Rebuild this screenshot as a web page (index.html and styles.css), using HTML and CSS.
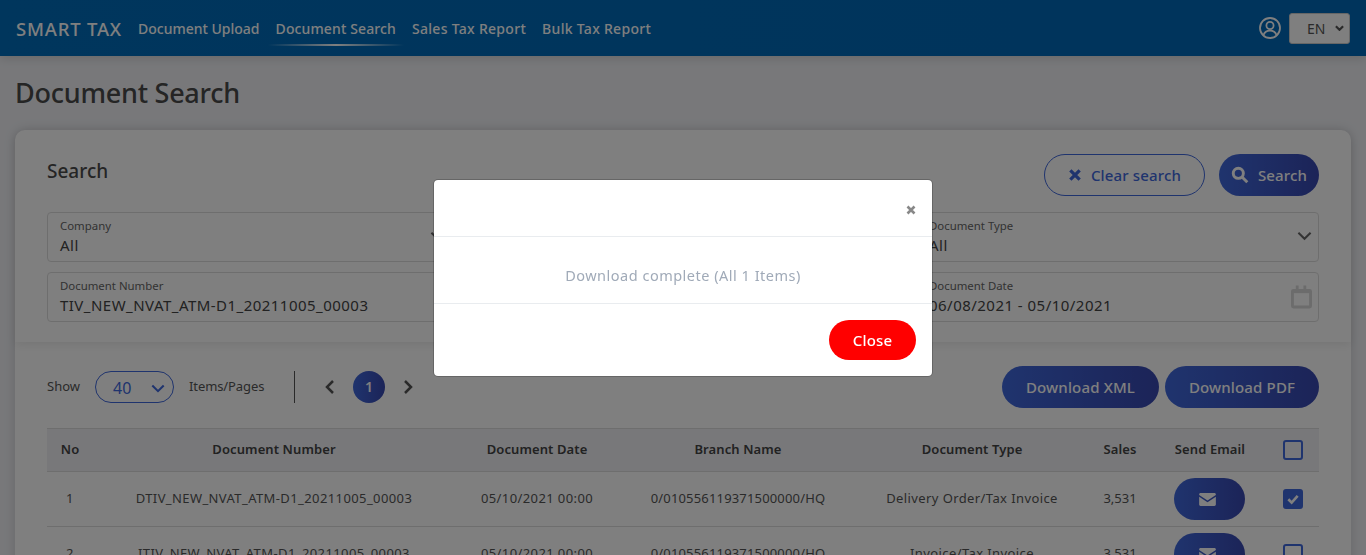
FILE: index.html
```html
<!DOCTYPE html>
<html>
    <head>
        <title>Smart Tax</title>
        <meta charset="utf-8">
        <link rel="stylesheet" href="styles.css">
    </head>
    <body>
        <header class="navbar">
            <div class="brand">SMART TAX</div>
            <nav class="nav_links">
                <a href="#">Document Upload</a>
                <a href="#" class="active">Document Search</a>
                <a href="#">Sales Tax Report</a>
                <a href="#">Bulk Tax Report</a>
            </nav>
            <svg class="user_icon" viewBox="0 0 24 24">
                <circle cx="12" cy="12" r="10"/>
                <circle cx="12" cy="9.5" r="3.6"/>
                <path d="M5.5 19c1-3 3.4-4.4 6.5-4.4s5.500 1.400 6.500 4.400"/>
            </svg>
            <div class="lang_select">
                <span>EN</span>
                <svg viewBox="0 0 10 6"><path d="M1 1l4 4 4-4"/></svg>
            </div>
        </header>

        <h1 class="page_title">Document Search</h1>

        <main class="panel">
            <section class="search_box">
                <div class="search_head">
                    <h2>Search</h2>
                    <div class="search_actions">
                        <button class="btn btn_outline">
                            <svg viewBox="0 0 12 12"><path d="M2 2l8 8M10 2l-8 8"/></svg>
                            Clear search
                        </button>
                        <button class="btn btn_primary">
                            <svg viewBox="0 0 16 16"><circle cx="6.500" cy="6.500" r="4.500"/><path d="M10 10l4.500 4.500"/></svg>
                            Search
                        </button>
                    </div>
                </div>
                <div class="fields">
                    <div class="field">
                        <label>Company</label>
                        <div class="value">All</div>
                        <svg class="field_icon" viewBox="0 0 16 10"><path d="M1.500 1.500L8 8l6.500-6.500"/></svg>
                    </div>
                    <div class="field"></div>
                    <div class="field">
                        <label>Document Type</label>
                        <div class="value">All</div>
                        <svg class="field_icon" viewBox="0 0 16 10"><path d="M1.500 1.500L8 8l6.500-6.500"/></svg>
                    </div>
                    <div class="field">
                        <label>Document Number</label>
                        <div class="value">TIV_NEW_NVAT_ATM-D1_20211005_00003</div>
                    </div>
                    <div class="field"></div>
                    <div class="field">
                        <label>Document Date</label>
                        <div class="value">06/08/2021 - 05/10/2021</div>
                        <svg class="calendar_icon" viewBox="0 0 22 24">
                            <path d="M6.500 0v5M14.500 0v5"/>
                            <rect x="1.500" y="5" width="19" height="17.500" rx="1"/>
                            <path d="M1.500 6.500h19"/>
                        </svg>
                    </div>
                </div>
            </section>

            <section class="results">
                <div class="toolbar">
                    <span class="show_label">Show</span>
                    <div class="page_size">
                        <span>40</span>
                        <svg viewBox="0 0 16 10"><path d="M1.500 1.500L8 8l6.500-6.500"/></svg>
                    </div>
                    <span class="items_label">Items/Pages</span>
                    <div class="pager">
                        <svg viewBox="0 0 10 16"><path d="M8 2L2 8l6 6"/></svg>
                        <span class="page_num">1</span>
                        <svg viewBox="0 0 10 16"><path d="M2 2l6 6-6 6"/></svg>
                    </div>
                    <div class="downloads">
                        <button class="btn btn_primary btn_xml">Download XML</button>
                        <button class="btn btn_primary btn_pdf">Download PDF</button>
                    </div>
                </div>

                <table class="doc_table">
                    <colgroup>
                        <col class="c_no"><col class="c_num"><col class="c_date"><col class="c_branch">
                        <col class="c_type"><col class="c_sales"><col class="c_mail"><col class="c_check">
                    </colgroup>
                    <tr>
                        <th>No</th>
                        <th>Document Number</th>
                        <th>Document Date</th>
                        <th>Branch Name</th>
                        <th>Document Type</th>
                        <th>Sales</th>
                        <th>Send Email</th>
                        <th><span class="check"></span></th>
                    </tr>
                    <tr>
                        <td>1</td>
                        <td>DTIV_NEW_NVAT_ATM-D1_20211005_00003</td>
                        <td>05/10/2021 00:00</td>
                        <td class="branch">0/010556119371500000/HQ</td>
                        <td>Delivery Order/Tax Invoice</td>
                        <td class="sales">3,531</td>
                        <td><button class="btn btn_primary btn_mail"><svg viewBox="0 0 18 14"><path d="M0 1.500C0 .7.700 0 1.500 0h15c.8 0 1.500.7 1.500 1.500v.6L9 8 0 2.100zM0 4l9 6 9-6v8.500c0 .8-.7 1.500-1.500 1.500h-15C.7 14 0 13.300 0 12.500z"/></svg></button></td>
                        <td><span class="check checked"><svg viewBox="0 0 12 12"><path d="M2.500 6.200l2.500 2.500 4.500-5"/></svg></span></td>
                    </tr>
                    <tr>
                        <td>2</td>
                        <td>ITIV_NEW_NVAT_ATM-D1_20211005_00003</td>
                        <td>05/10/2021 00:00</td>
                        <td class="branch">0/010556119371500000/HQ</td>
                        <td>Invoice/Tax Invoice</td>
                        <td class="sales">3,531</td>
                        <td><button class="btn btn_primary btn_mail"><svg viewBox="0 0 18 14"><path d="M0 1.500C0 .7.700 0 1.500 0h15c.8 0 1.500.7 1.500 1.500v.6L9 8 0 2.100zM0 4l9 6 9-6v8.500c0 .8-.7 1.500-1.500 1.500h-15C.7 14 0 13.300 0 12.500z"/></svg></button></td>
                        <td><span class="check"></span></td>
                    </tr>
                </table>
            </section>
        </main>

        <div class="backdrop">
            <div class="modal">
                <div class="modal_head">
                    <svg viewBox="0 0 10 10"><path d="M1.500 1.500l7 7M8.500 1.500l-7 7"/></svg>
                </div>
                <div class="modal_body">Download complete (All 1 Items)</div>
                <div class="modal_foot">
                    <button class="btn btn_close">Close</button>
                </div>
            </div>
        </div>
    </body>
</html>
```

FILE: styles.css
```css
html, body {
    height: 100%;
    overflow: hidden;
}

body {
    margin: 0;
    font-family: "Noto Sans", sans-serif;
    background-color: #f0f1f5;
    color: #555;
}

h1, h2 {
    margin: 0;
    font-weight: 500;
}

svg {
    display: block;
    fill: none;
    stroke: currentColor;
}

/* top bar */
.navbar {
    display: flex;
    align-items: center;
    height: 56px;
    padding: 0 16px;
    background: linear-gradient(90deg, #006cba, #0068b8);
    box-shadow: 0 2px 10px rgba(0, 0, 0, .15);
    color: white;
}

.brand {
    width: 114px;
    font-size: 18.500px;
    font-weight: 500;
    letter-spacing: .8px;
}

.nav_links {
    display: flex;
    flex: 1;
    height: 100%;
}

.nav_links a {
    display: flex;
    align-items: center;
    position: relative;
    padding: 0 8px;
    color: white;
    font-size: 14px;
    font-weight: 500;
    letter-spacing: .12px;
    text-decoration: none;
}

.nav_links a:first-child {
    letter-spacing: 0;
}

.nav_links a:nth-child(n+3) {
    letter-spacing: .3px;
}

.nav_links a.active::after {
    content: "";
    position: absolute;
    left: 0;
    right: 0;
    top: 44px;
    height: 2px;
    background: linear-gradient(90deg, transparent, #fff 50%, transparent);
}

.user_icon {
    width: 24px;
    height: 24px;
    stroke-width: 1.800;
    margin-right: 7px;
}

.lang_select {
    display: flex;
    align-items: center;
    box-sizing: border-box;
    width: 61px;
    height: 31px;
    padding: 0 5px 0 17px;
    background: white;
    border: 1px solid #ccc;
    border-radius: 3px;
    color: #555;
    font-size: 14px;
}

.lang_select span {
    flex: 1;
}

.lang_select svg {
    width: 9px;
    height: 6px;
    stroke-width: 2.400;
}

.page_title {
    height: 74px;
    padding-left: 15px;
    color: #4a4a4a;
    font-size: 27px;
    line-height: 73px;
    letter-spacing: -.25px;
}

/* white sheet */
.panel {
    margin: 0 15px;
    height: 500px;
    background: white;
    border-radius: 10px 10px 0 0;
    box-shadow: 0 0 12px rgba(0, 0, 0, .15);
}

.search_box {
    box-sizing: border-box;
    height: 212px;
    padding: 24px 32px 0;
    border-radius: 10px 10px 0 0;
    box-shadow: 0 3px 10px rgba(0, 0, 0, .08);
}

.search_head {
    display: flex;
    justify-content: space-between;
    height: 58px;
}

.search_head h2 {
    color: #4a4a4a;
    font-size: 19px;
    line-height: 34px;
}

.search_actions {
    display: flex;
    gap: 14px;
}

.btn {
    display: flex;
    align-items: center;
    justify-content: center;
    box-sizing: border-box;
    height: 42px;
    padding: 0;
    border: 0;
    border-radius: 21px;
    font-family: inherit;
    font-size: 15px;
    font-weight: 500;
    letter-spacing: .15px;
}

.btn_outline {
    width: 161px;
    gap: 9px;
    background: white;
    border: 1px solid #3f68dc;
    color: #3f68dc;
}

.btn_outline svg {
    width: 14px;
    height: 14px;
    stroke-width: 2.800;
}

.btn_primary {
    background: linear-gradient(90deg, #3f68dc, #3848b0);
    color: white;
}

.search_actions .btn_primary {
    width: 100px;
    gap: 9px;
}

.search_actions .btn_primary svg {
    width: 18px;
    height: 18px;
    stroke-width: 2.600;
}

.fields {
    display: grid;
    grid-template-columns: 405px 1fr 403px;
    grid-auto-rows: 50px;
    gap: 10px;
}

.field {
    position: relative;
    box-sizing: border-box;
    padding: 5px 12px 0;
    border: 1px solid #ddd;
    border-radius: 4px;
}

.field label {
    display: block;
    font-size: 11.400px;
    line-height: 15px;
    color: #666;
}

.value {
    margin-top: 1px;
    font-size: 15px;
    line-height: 22px;
    color: #444;
    letter-spacing: .47px;
}

.field_icon {
    position: absolute;
    right: 6px;
    top: 18px;
    width: 15px;
    height: 10px;
    stroke-width: 2.200;
    color: #666;
}

.calendar_icon {
    position: absolute;
    right: 6px;
    top: 12px;
    width: 21px;
    height: 24px;
    stroke-width: 3;
    color: #d8d8d8;
}

/* list part */
.results {
    padding: 0 32px;
}

.toolbar {
    display: flex;
    align-items: center;
    box-sizing: border-box;
    height: 86px;
    padding-top: 4px;
    font-size: 13px;
}

.show_label {
    width: 48px;
    margin-bottom: 3px;
}

.page_size {
    display: flex;
    align-items: center;
    justify-content: space-between;
    box-sizing: border-box;
    width: 79px;
    height: 32px;
    padding: 2px 8px 0 17px;
    border: 1px solid #3f68dc;
    border-radius: 16px;
    color: #3f68dc;
    font-size: 16px;
}

.page_size svg {
    width: 14px;
    height: 9px;
    stroke-width: 2.400;
}

.items_label {
    width: 105px;
    margin: 0 0 3px 15px;
    letter-spacing: -.1px;
}

.pager {
    display: flex;
    align-items: center;
    height: 32px;
    flex: 1;
    padding-left: 30px;
    border-left: 1px solid #555;
    color: #555;
}

.pager svg {
    width: 10px;
    height: 16px;
    stroke-width: 2.500;
}

.page_num {
    width: 32px;
    height: 32px;
    margin: 0 18px;
    border-radius: 50%;
    background: linear-gradient(90deg, #3f68dc, #3848b0);
    color: white;
    font-size: 14px;
    font-weight: 600;
    line-height: 32px;
    text-align: center;
}

.downloads {
    display: flex;
    gap: 6px;
}

.btn_xml {
    width: 157px;
}

.btn_pdf {
    width: 154px;
}

.doc_table {
    width: 1272px;
    table-layout: fixed;
    border-collapse: collapse;
    font-size: 13px;
    text-align: center;
}

.c_no { width: 46px; }
.c_num { width: 362px; }
.c_date { width: 164px; }
.c_branch { width: 238px; }
.c_type { width: 230px; }
.c_sales { width: 66px; }
.c_mail { width: 114px; }
.c_check { width: 52px; }

.doc_table th {
    height: 40px;
    padding: 0 0 2px;
    background: #f0f1f5;
    border-top: 1px solid #ddd;
    border-bottom: 1px solid #ddd;
    font-size: 13px;
    font-weight: 600;
    letter-spacing: .1px;
    color: #444;
}

.doc_table td {
    height: 52px;
    padding: 0 0 2px;
    border-bottom: 1px solid #ddd;
    letter-spacing: .4px;
}

.doc_table td.branch {
    letter-spacing: .17px;
}

.doc_table td.sales {
    letter-spacing: 0;
}

.btn_mail {
    width: 71px;
    margin: 2px 0 0 21px;
    padding-right: 5px;
}

.btn_mail svg {
    width: 17px;
    height: 13px;
    fill: white;
    stroke: none;
}

.check {
    display: block;
    box-sizing: border-box;
    width: 20px;
    height: 20px;
    margin: 2px 0 0 16px;
    border: 2px solid #3f68dc;
    border-radius: 3px;
}

.check.checked {
    background: #3f68dc;
    color: white;
}

.check svg {
    width: 16px;
    height: 16px;
    stroke-width: 2;
}

/* dialog over everything */
.backdrop {
    position: fixed;
    inset: 0;
    background: rgba(0, 0, 0, .5);
}

.modal {
    box-sizing: border-box;
    width: 500px;
    margin: 179px auto 0;
    background: white;
    background-clip: padding-box;
    border: 1px solid rgba(0, 0, 0, .2);
    border-radius: 5px;
}

.modal_head {
    display: flex;
    justify-content: flex-end;
    box-sizing: border-box;
    height: 57px;
    padding: 25px 16px 0 0;
    border-bottom: 1px solid #e9ecef;
    color: #888;
}

.modal_head svg {
    width: 10px;
    height: 10px;
    stroke-width: 2.600;
}

.modal_body {
    height: 66px;
    border-bottom: 1px solid #e9ecef;
    color: #a0aab8;
    font-size: 14.500px;
    text-align: center;
    letter-spacing: .5px;
    line-height: 76px;
}

.modal_foot {
    display: flex;
    justify-content: flex-end;
    padding: 16px;
}

.btn_close {
    width: 87px;
    height: 40px;
    border-radius: 20px;
    background: #ff0000;
    color: white;
}
```
